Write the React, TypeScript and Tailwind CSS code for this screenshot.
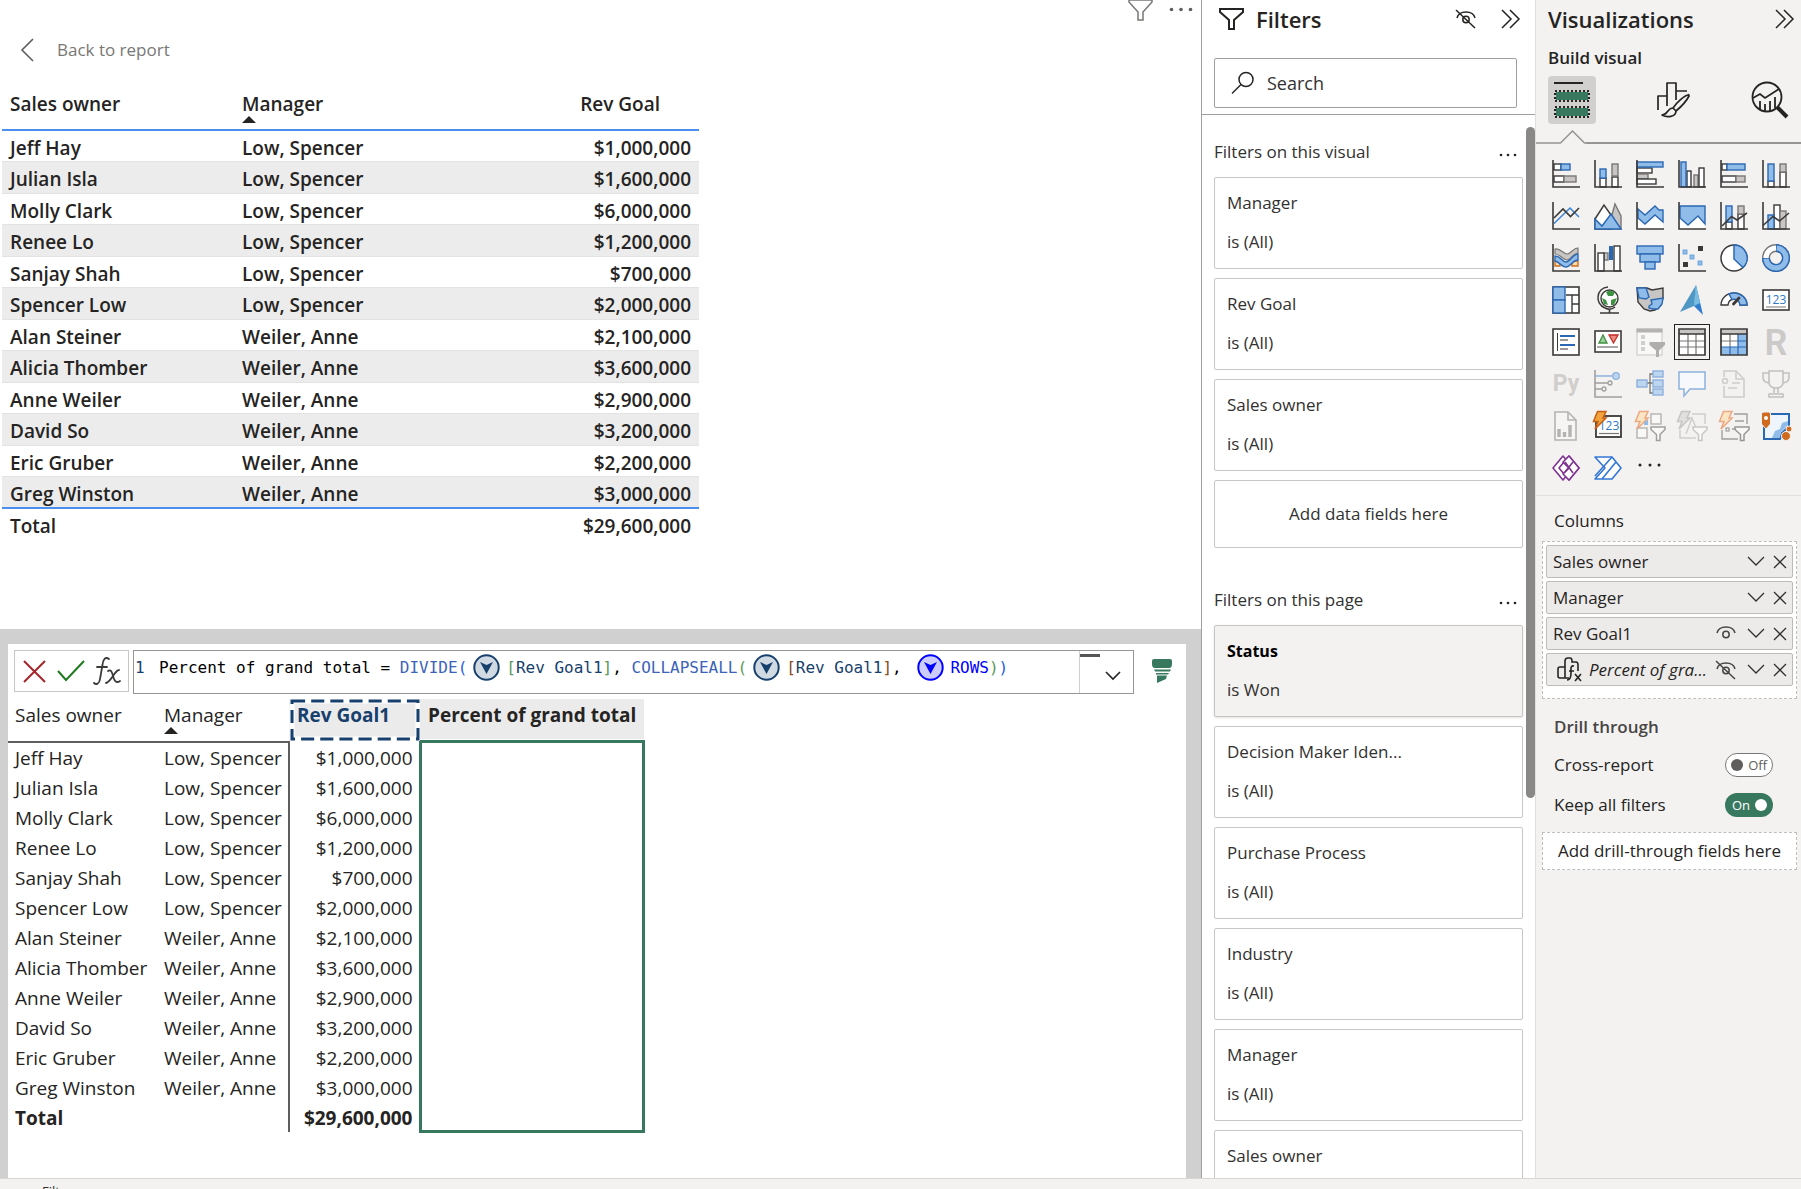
import React from "react";

const DARK = "#3b3a39";
const BLUE = "#2b68b3";
const SKY = "#8fbce8";
const MID = "#797775";
const LIGHT = "#c8c6c4";

type BoxProps = { x: number; y: number; X: number; Y: number; k?: "w" | "b" | "g" };

/** Bar given by its two opposite corners. */
function B({ x, y, X, Y, k = "w" }: BoxProps) {
  const fill = k === "w" ? "#fff" : k === "b" ? SKY : LIGHT;
  const stroke = k === "w" ? DARK : k === "b" ? BLUE : MID;
  return <rect x={x} y={y} width={X - x} height={Y - y} fill={fill} stroke={stroke} strokeWidth={1.4} />;
}

const Axis = ({ c = DARK }: { c?: string }) => <path d="M1 0V27H28" fill="none" stroke={c} strokeWidth={1.6} />;

const Bolt = ({ faded, gray }: { faded?: boolean; gray?: boolean }) => (
  <path
    d="M3.500 -.5H12L9 6H12L1 17L4 9.500H-.5Z"
    fill={gray ? "#e1dfdd" : faded ? "#fbe6c4" : "#f2a33c"}
    stroke={gray ? "#c8c6c4" : faded ? "#eaa982" : "#c55f16"}
    strokeWidth={1.5}
  />
);

const SmallFunnel = ({ c }: { c: string }) => (
  <path d="M15 15H29V17.500L24 22.500V28.500H20.500V22.500L15 17.500Z" fill="#f8f8f7" stroke={c} strokeWidth={1.5} />
);

const visuals: { name: string; art: React.ReactNode; selected?: boolean }[] = [
  { name: "Stacked bar chart", art: <><B x={2} y={4} X={9} Y={10} /><B x={9} y={4} X={18} Y={10} k="b" /><B x={2} y={16} X={12} Y={22} /><B x={12} y={16} X={24} Y={22} k="g" /><Axis /></> },
  { name: "Stacked column chart", art: <><B x={6} y={18} X={12} Y={27} /><B x={6} y={9} X={12} Y={18} k="b" /><B x={18} y={17} X={24} Y={27} /><B x={18} y={4} X={24} Y={16} k="g" /><Axis /></> },
  { name: "Clustered bar chart", art: <><B x={1} y={8} X={16} Y={13} /><B x={1} y={14} X={12} Y={19} k="g" /><B x={1} y={19} X={20} Y={24} /><B x={1} y={2} X={27} Y={7} k="b" /><Axis /></> },
  { name: "Clustered column chart", art: <><B x={9} y={11} X={13} Y={27} /><B x={3} y={2} X={8} Y={27} k="b" /><B x={16} y={15} X={20} Y={27} k="g" /><B x={21} y={8} X={26} Y={27} /><Axis /></> },
  { name: "100% stacked bar chart", art: <><B x={2} y={4} X={7} Y={10} /><B x={7} y={4} X={25} Y={10} k="b" /><B x={2} y={16} X={16} Y={22} /><B x={16} y={16} X={25} Y={22} k="g" /><Axis /></> },
  { name: "100% stacked column chart", art: <><B x={6} y={21} X={12} Y={27} /><B x={6} y={4} X={12} Y={21} k="b" /><B x={18} y={12} X={24} Y={27} /><B x={18} y={4} X={24} Y={12} k="g" /><Axis /></> },
  { name: "Line chart", art: <><path d="M2 21.500L18 6L27 15" fill="none" stroke="#3f86cf" strokeWidth={1.6} /><path d="M2 16L11 7L18.500 14.500L27 6" fill="none" stroke={DARK} strokeWidth={1.6} /><Axis /></> },
  { name: "Area chart", art: <><path d="M21 2L27 14V27H14Z" fill={LIGHT} stroke={MID} strokeWidth={1.4} /><path d="M1 17L10 3L17 13V27H1Z" fill="#fff" stroke={DARK} strokeWidth={1.5} /><path d="M1 17L8 24L17 12L27 27H1Z" fill={SKY} stroke={BLUE} strokeWidth={1.5} /></> },
  { name: "Stacked area chart", art: <><path d="M2 16L9 22L19 14L27 20V27H2Z" fill="#fff" /><path d="M2 7L9 13L19 4L23 8H27V20L19 13L9 22L2 16Z" fill={SKY} stroke={BLUE} strokeWidth={1.4} /><Axis /></> },
  { name: "100% stacked area chart", art: <><path d="M2 16L10 23L20 14L27 22V27H2Z" fill="#fff" /><path d="M2 4H27V22L20 14L10 23L2 16Z" fill={SKY} stroke={BLUE} strokeWidth={1.4} /><Axis /></> },
  { name: "Line and stacked column chart", art: <><B x={6} y={20} X={12} Y={27} /><B x={6} y={4} X={12} Y={20} k="b" /><B x={18} y={12} X={24} Y={27} /><B x={18} y={4} X={24} Y={12} k="g" /><path d="M2 24L11.500 14.500L17 18L27 11" fill="none" stroke={DARK} strokeWidth={1.6} /><Axis /></> },
  { name: "Line and clustered column chart", art: <><B x={12} y={3} X={18} Y={27} /><B x={18} y={9} X={24} Y={27} k="g" /><B x={6} y={13} X={12} Y={27} k="b" /><path d="M1 23.500L11 14.500L17.500 19L27 11" fill="none" stroke={DARK} strokeWidth={1.6} /><Axis /></> },
  { name: "Ribbon chart", art: <><path d="M3 17H8V22H3ZM20 17H26V22H20Z" fill="#fbd9a8" stroke="#d06f1e" strokeWidth={1.4} /><path d="M3 5C9 4 11 10 15 10S21 4 26 4V9C21 9 19 16 15 16S8 10 3 10Z" fill={LIGHT} stroke={MID} strokeWidth={1.2} /><path d="M3 12C9 12 10 18 14 18S21 10 26 10V16C20 16 19 23 14 23S8 18 3 17Z" fill={SKY} stroke={BLUE} strokeWidth={1.4} /><Axis /></> },
  { name: "Waterfall chart", art: <><B x={10} y={9} X={14} Y={16} k="g" /><B x={4} y={9} X={10} Y={27} /><rect x={15} y={2} width={4} height={14} fill={BLUE} /><B x={20} y={2} X={26} Y={27} /><Axis /></> },
  { name: "Funnel", art: <><B x={1} y={2} X={27} Y={10} k="b" /><B x={4} y={10} X={24} Y={18} k="b" /><B x={9} y={18} X={19} Y={25} k="b" /></> },
  { name: "Scatter chart", art: <><g fill={SKY} stroke="#5b9bd8" strokeWidth={0.8}><rect x={5} y={6} width={4} height={4} /><rect x={12} y={11} width={4} height={4} /><rect x={20} y={17} width={4} height={4} /></g><g fill={DARK}><rect x={20} y={2} width={5} height={5} /><rect x={5} y={18} width={5} height={5} /></g><Axis /></> },
  { name: "Pie chart", art: <><circle cx={14} cy={14} r={13} fill="#fff" stroke={DARK} strokeWidth={1.5} /><path d="M14 1A13 13 0 0 1 23 23.500L14 15Z" fill={SKY} stroke={BLUE} strokeWidth={1.5} /></> },
  { name: "Donut chart", art: <><circle cx={14} cy={14} r={10} fill="none" stroke={MID} strokeWidth={8} /><circle cx={14} cy={14} r={10} fill="none" stroke="#fff" strokeWidth={5.200} /><path d="M14 4A10 10 0 1 1 4 14" fill="none" stroke={BLUE} strokeWidth={8} /><path d="M14.700 4A10 10 0 1 1 4 14.700" fill="none" stroke={SKY} strokeWidth={5.200} /></> },
  { name: "Treemap", art: <><rect x={1} y={1} width={26} height={26} fill="#fff" stroke={DARK} strokeWidth={1.6} /><path d="M14 9H27M20 9V27M20 18H27" stroke={DARK} strokeWidth={1.4} /><B x={1} y={1} X={13} Y={14} k="b" /><B x={1} y={14} X={13} Y={27} k="b" /></> },
  { name: "Map", art: <><circle cx={15.500} cy={12.500} r={8.500} fill="#fff" stroke={DARK} strokeWidth={1.4} /><path d="M12 6L16 4.500L21 6L19 10L14 10ZM8 12L12 14L14 19L10 18ZM17 14L23 12L20 19L17 19Z" fill="#3f9142" /><path d="M14 1C2 2 .5 18 11 22C14 23.500 18 23.500 21 21" fill="none" stroke={DARK} strokeWidth={1.5} /><path d="M15.500 23V27M6 27H25" stroke={DARK} strokeWidth={1.6} /></> },
  { name: "Filled map", art: <><path d="M1 2H11L16 4L27 2V12L25 19L19 24L14 25L8 23L2 16Z" fill={LIGHT} stroke={DARK} strokeWidth={1.4} /><path d="M1 2H10L13 11L10 13L3 12Z" fill={SKY} stroke={BLUE} strokeWidth={1.4} /><path d="M15 14L27 12L26 18L22 23H17L13 22V20L16 18Z" fill={SKY} stroke={BLUE} strokeWidth={1.4} /></> },
  { name: "Azure map", art: <><path d="M18 -1L25 29L16 20Z" fill="#2f7bd0" /><path d="M18 -1L2 26L16 20Z" fill="#4f97c4" /><path d="M18 -1L16 20L22 17Z" fill="#79bde0" /></> },
  { name: "Gauge", art: <><path d="M1 19A13 12 0 0 1 27 19H20A6 6 0 0 0 8 19Z" fill="#fff" stroke={DARK} strokeWidth={1.4} /><path d="M9 8A13 12 0 0 1 27 19H20A6 6 0 0 0 12 13.500Z" fill={SKY} stroke={BLUE} strokeWidth={1.4} /><path d="M19 12L13.500 18" stroke={DARK} strokeWidth={2.800} strokeLinecap="round" /></> },
  { name: "Card", art: <><rect x={1} y={4} width={26} height={20} fill="#fff" stroke={DARK} strokeWidth={1.6} /><text x={14} y={18} textAnchor="middle" fontSize={12} fill="#2f78c4">123</text><path d="M4 21H24" stroke={MID} /></> },
  { name: "Multi-row card", art: <><rect x={1} y={1} width={26} height={26} fill="#fff" stroke={DARK} strokeWidth={1.6} /><path d="M5.500 5V23" stroke={DARK} /><path d="M8 8H23M8 17H23" stroke={BLUE} strokeWidth={2.200} /><path d="M8 12H16M8 21H16" stroke={MID} strokeWidth={1.500} /></> },
  { name: "KPI", art: <><rect x={1} y={3} width={26} height={21} fill="#fff" stroke={DARK} strokeWidth={1.6} /><path d="M5 15L9 7L13 15Z" fill="#9bd09d" stroke="#3f9142" strokeWidth={1.3} /><path d="M15 7H24L19.500 15Z" fill="#ef8a80" stroke="#bf2f25" strokeWidth={1.3} /><path d="M3 19H24" stroke={MID} strokeWidth={1.3} /></> },
  { name: "Slicer", art: <><rect x={1} y={1} width={25} height={26} fill="#f8f8f7" stroke="#c8c6c4" /><rect x={0.500} y={0.500} width={26} height={4} fill="#b5b3b1" /><g fill="#d2d0ce"><rect x={5} y={7} width={4} height={4} /><rect x={5} y={13} width={4} height={4} /><rect x={5} y={19} width={4} height={4} /></g><path d="M13.500 14H29V17L23 22.500V29H20V22.500L13.500 17Z" fill="#b0aeac" /></> },
  { name: "Table", selected: true, art: <><rect x={1} y={1} width={26} height={26} fill="#fff" /><rect x={1} y={1} width={26} height={5} fill={LIGHT} /><path d="M1 13H27M1 19H27M10 6V27M18 6V27" stroke={MID} strokeWidth={1.2} /><path d="M1 6H27M1 1H27V27H1Z" fill="none" stroke={DARK} strokeWidth={1.7} /></> },
  { name: "Matrix", art: <><rect x={1} y={1} width={26} height={26} fill="#fff" /><rect x={1} y={1} width={26} height={5} fill={LIGHT} /><path d="M18 6H27V27H1V19H18Z" fill={SKY} /><path d="M1 13H18M10 6V19" stroke={MID} strokeWidth={1.2} /><path d="M18 6V27M18 13H27M1 19H27M10 19V27" stroke={BLUE} strokeWidth={1.2} /><path d="M1 6H27M1 1H27V27H1Z" fill="none" stroke={DARK} strokeWidth={1.7} /></> },
  { name: "R script visual", art: <text x={14} y={27} textAnchor="middle" fontSize={36} fontWeight={600} fontFamily="Roboto, sans-serif" fill="#cccac8">R</text> },
  { name: "Python visual", art: <text x={14} y={21} textAnchor="middle" fontSize={23} fontWeight={700} fontFamily="Roboto, sans-serif" fill="#d0cecc">Py</text> },
  { name: "Key influencers", art: <><Axis c="#a19f9d" /><path d="M1 6H18" stroke="#8db0dc" strokeWidth={1.5} /><path d="M1 13H15M1 19H9" stroke="#a19f9d" strokeWidth={1.4} /><circle cx={22} cy={6} r={3.300} fill="#bcd6f0" stroke="#8db0dc" strokeWidth={1.3} /><circle cx={16} cy={13} r={2} fill="#f3f2f1" stroke="#a19f9d" strokeWidth={1.3} /><circle cx={10} cy={19} r={2} fill="#f3f2f1" stroke="#a19f9d" strokeWidth={1.3} /></> },
  { name: "Decomposition tree", art: <><path d="M10 13H17M17 4H14V23H17" fill="none" stroke={MID} strokeWidth={1.3} /><g fill="#bcd6f0" stroke="#8db0dc" strokeWidth={1.4}><rect x={1} y={10} width={10} height={7} /><rect x={17} y={1} width={10} height={6} /><rect x={17} y={10} width={10} height={7} /><rect x={17} y={19} width={10} height={6} /></g></> },
  { name: "Q&A", art: <path d="M1 2H27V19H12L6 26V19H1Z" fill="#f6f8fb" stroke="#8db0dc" strokeWidth={1.5} /> },
  { name: "Smart narrative", art: <><g fill="none" stroke="#cfcdcb" strokeWidth={1.6}><path d="M4 7V1H16L24 9V27H4V16M16 1V9H24M12 13H20M8 18H17" /><circle cx={5} cy={11} r={2.500} /></g></> },
  { name: "Metrics", art: <g fill="none" stroke="#c3c1bf" strokeWidth={1.6}><path d="M7 1H21V12C21 16 18 18 14 18S7 16 7 12ZM7 3H1V7C1 11 4 13 8 13M21 3H27V7C27 11 24 13 20 13M12 18V23M16 18V23M7 27V24H21V27Z" /></g> },
  { name: "Paginated report", art: <><path d="M3 0V28H24V8L16 0Z" fill="#f6f5f4" stroke="#b5b3b1" strokeWidth={1.600} /><path d="M16 0V8H24" fill="none" stroke="#b5b3b1" strokeWidth={1.600} /><path d="M7 17V25M12.500 20V25M18 13V25" stroke="#b5b3b1" strokeWidth={3.400} /></> },
  { name: "Card (new)", art: <><rect x={2} y={4} width={25} height={21} fill="#fff" stroke={DARK} strokeWidth={1.8} /><text x={15} y={18} textAnchor="middle" fontSize={12} fill="#2f78c4">123</text><path d="M5 21.500H25" stroke={MID} strokeWidth={1.2} /><Bolt /></> },
  { name: "Slicer (new)", art: <><g fill="#f8f8f7" stroke="#b5b3b1" strokeWidth={1.4}><rect x={1} y={16} width={10} height={10} /><rect x={15} y={2} width={10} height={10} /></g><rect x={8} y={8} width={4} height={5} fill={SKY} /><Bolt faded /><SmallFunnel c="#a19f9d" /></> },
  { name: "Text slicer", art: <><path d="M14 2H27V12M2 18V26H18M8 22L14 6L18 16" fill="none" stroke="#d0cecc" strokeWidth={1.5} /><Bolt gray /><SmallFunnel c="#c8c6c4" /></> },
  { name: "List slicer", art: <><path d="M14 2H27V12M2 18V27H18M15 9H24M12 17H15" fill="none" stroke="#a19f9d" strokeWidth={1.4} /><rect x={6} y={16} width={3} height={3} fill="none" stroke="#a19f9d" strokeWidth={1.2} /><Bolt faded /><SmallFunnel c="#979593" /></> },
  { name: "ArcGIS Maps", art: <><path d="M7 2H27V14L20 21L18 27H2V13Z" fill="#eef5fc" stroke={BLUE} strokeWidth={2} /><path d="M26 3V9L20 11L18 17L13 19L10 26H17L19 20L26 13Z" fill={SKY} /><path d="M-.5 2Q-.5 0 2 0H6.500Q8.500 0 8.500 2V12L4 17L-.5 12Z" fill="#d06a1e" stroke="#f3f2f1" /><circle cx={4} cy={6} r={2} fill="#fff" /><circle cx={24} cy={24} r={4.500} fill="#d06a1e" stroke="#f3f2f1" /><circle cx={27} cy={17} r={3} fill="#d06a1e" stroke="#f3f2f1" /></> },
  { name: "Power Apps", art: <g fill="#fff" stroke="#7f3390" strokeWidth={1.6} strokeLinejoin="round"><path d="M11 2L1 14L11 26L21 14Z" /><path d="M17 2L27 14L17 26L7 14Z" fill="none" stroke="#7f3390" /><path d="M17 2L11 8L17 14L11 20L17 26L27 14Z" /><path d="M21 8L13 18M13 8L21 19" /></g> },
  { name: "Power Automate", art: <g fill="#fff" stroke="#3277d5" strokeWidth={1.600} strokeLinejoin="round"><path d="M1 3H18L27 14L18 25H1L11 14Z" /><path d="M18 3L1 22M22 8L8 25" /></g> },
];

const people: [string, string, string][] = [
  ["Jeff Hay", "Low, Spencer", "$1,000,000"],
  ["Julian Isla", "Low, Spencer", "$1,600,000"],
  ["Molly Clark", "Low, Spencer", "$6,000,000"],
  ["Renee Lo", "Low, Spencer", "$1,200,000"],
  ["Sanjay Shah", "Low, Spencer", "$700,000"],
  ["Spencer Low", "Low, Spencer", "$2,000,000"],
  ["Alan Steiner", "Weiler, Anne", "$2,100,000"],
  ["Alicia Thomber", "Weiler, Anne", "$3,600,000"],
  ["Anne Weiler", "Weiler, Anne", "$2,900,000"],
  ["David So", "Weiler, Anne", "$3,200,000"],
  ["Eric Gruber", "Weiler, Anne", "$2,200,000"],
  ["Greg Winston", "Weiler, Anne", "$3,000,000"],
];

const SortMark = () => (
  <svg className="absolute top-full left-0" width="14" height="7" viewBox="0 0 14 7" aria-hidden="true">
    <path d="M0 7L7 0L14 7Z" fill="#252423" />
  </svg>
);

const DoubleChevron = () => (
  <svg width="20" height="20" viewBox="0 0 20 20" fill="none" stroke="#252423" strokeWidth="1.5" aria-hidden="true">
    <path d="M1 1L10 10L1 19M9 1L18 10L9 19" />
  </svg>
);

const EyeIcon = ({ off, className }: { off?: boolean; className?: string }) => (
  <svg className={className} width="22" height="20" viewBox="0 0 22 20" fill="none" stroke="currentColor" strokeWidth="1.5" aria-hidden="true">
    <path d="M2 9C4 1 18 1 20 9" />
    <circle cx="11" cy="10.500" r="3.2" />
    {off && <path d="M1 1L20 19" />}
  </svg>
);

function TopTable() {
  return (
    <table className="w-[697px] table-fixed border-collapse text-[19px] leading-6 font-semibold text-[#252423]">
      <colgroup>
        <col className="w-[232px]" />
        <col className="w-[232px]" />
        <col />
      </colgroup>
      <thead>
        <tr className="h-12 border-b-2 border-[#4a8fee] text-left align-top">
          <th className="px-2 pt-2.5 font-semibold">Sales owner</th>
          <th className="px-2 pt-2.5 font-semibold">
            <span className="relative inline-block">Manager<SortMark /></span>
          </th>
          <th className="pt-2.5 pr-[39px] text-right font-semibold">Rev Goal</th>
        </tr>
      </thead>
      <tbody>
        {people.map(([owner, manager, goal]) => (
          <tr key={owner} className="h-[31px] even:h-[32px] even:border-y even:border-[#e3e3e3] even:bg-[#ececec]">
            <td className="px-2 pt-1">{owner}</td>
            <td className="px-2 pt-1">{manager}</td>
            <td className="px-2 pt-1 text-right">{goal}</td>
          </tr>
        ))}
      </tbody>
      <tfoot>
        <tr className="h-[34px] border-t-2 border-[#4a8fee]">
          <td className="px-2">Total</td>
          <td />
          <td className="px-2 text-right">$29,600,000</td>
        </tr>
      </tfoot>
    </table>
  );
}

function CalcTable() {
  return (
    <table className="mt-[5px] w-[637px] table-fixed border-collapse text-[19px] leading-6 text-[#252423]">
      <colgroup>
        <col className="w-[149px]" />
        <col className="w-[132px]" />
        <col className="w-[131px]" />
        <col />
      </colgroup>
      <thead>
        <tr className="h-[43px] text-left align-top">
          <th className="border-b-2 border-[#605e5c] pt-1 pl-[7px] font-normal">Sales owner</th>
          <th className="border-b-2 border-[#605e5c] pt-1 pl-[7px] font-normal">
            <span className="relative inline-block">Manager<SortMark /></span>
          </th>
          <th className="p-0">
            <div className="relative h-[42px] bg-[#ebebeb] pt-1 pl-2 font-bold text-[#17406d]">
              Rev Goal1
              <svg className="absolute inset-0 h-full w-full" viewBox="0 0 130 42" preserveAspectRatio="none" fill="none" strokeWidth="3" aria-hidden="true">
                <rect x="3" y="2" width="125" height="38" stroke="#fff" strokeWidth="5" />
                <rect x="3" y="2" width="125" height="38" stroke="#17406d" strokeDasharray="13 6" />
              </svg>
            </div>
          </th>
          <th className="p-0">
            <div className="h-10 bg-[#ebebeb] pt-1 pl-2 font-bold whitespace-nowrap">Percent of grand total</div>
          </th>
        </tr>
      </thead>
      <tbody>
        {people.map(([owner, manager, goal], i) => (
          <tr key={owner} className="h-[30px]">
            <td className="pt-0.5 pl-[7px]">{owner}</td>
            <td className="border-r-2 border-[#605e5c] pt-0.5 pl-[7px] whitespace-nowrap">{manager}</td>
            <td className="pt-0.5 pr-1.5 text-right">{goal}</td>
            {i === 0 && <td rowSpan={13} className="border-3 border-[#38785f]" />}
          </tr>
        ))}
        <tr className="h-[30px] font-bold">
          <td className="pt-0.5 pl-[7px]">Total</td>
          <td className="border-r-2 border-[#605e5c]" />
          <td className="pt-0.5 pr-1.5 text-right">$29,600,000</td>
        </tr>
      </tbody>
    </table>
  );
}

const FieldBadge = ({ bright }: { bright?: boolean }) => (
  <svg className="mx-1.5 shrink-0" width="27" height="27" viewBox="0 0 27 27" aria-hidden="true">
    <circle cx="13.5" cy="13.5" r="12.2" fill={bright ? "#ccccff" : "#d1d9e2"} stroke={bright ? "#0000ff" : "#17406d"} strokeWidth="2" />
    <path d="M7 8L13.500 11L20 8L13.500 20Z" fill={bright ? "#0000ff" : "#17406d"} />
  </svg>
);

function FormulaBar() {
  return (
    <div className="flex items-start pr-3 pl-1.5">
      <div className="flex h-[42px] w-[115px] shrink-0 items-center justify-between border border-[#c8c6c4] px-1.5">
        <button aria-label="Cancel">
          <svg width="28" height="26" viewBox="0 0 28 26" fill="none" stroke="#a4262c" strokeWidth="2" aria-hidden="true"><path d="M3 3L24 24M24 3L3 24" /></svg>
        </button>
        <button aria-label="Commit">
          <svg width="30" height="26" viewBox="0 0 30 26" fill="none" stroke="#1f7a1f" strokeWidth="2" aria-hidden="true"><path d="M2 13L10 22L28 3" /></svg>
        </button>
        <button aria-label="Functions">
          <svg width="29" height="30" viewBox="0 0 29 30" fill="none" stroke="#3b3a39" strokeWidth="1.8" strokeLinecap="round" aria-hidden="true">
            <path d="M16 3C12 0 10 4 9.500 9L7 23C6.500 28 3 29 1 27M4 11H14" />
            <path d="M15 15C18 13 19 16 20 20S23 28 27 25M26 14C22 14 18 26 13 27" />
          </svg>
        </button>
      </div>
      <div className="ml-1 flex h-11 min-w-0 flex-1 border border-[#979593]">
        <div className="flex h-[34px] min-w-0 flex-1 items-center pl-px font-['DejaVu_Sans_Mono',monospace] text-[16px] whitespace-pre text-black">
          <span className="w-6 shrink-0 text-[#17406d]">1</span>
          <span>Percent of grand total = <span className="text-[#3b63b8]">DIVIDE</span><span className="text-[#2a5fd8]">(</span></span>
          <FieldBadge />
          <span><span className="text-[#5a9a5a]">[</span><span className="text-[#17406d]">Rev Goal1</span><span className="text-[#5a9a5a]">]</span>, <span className="text-[#3b63b8]">COLLAPSEALL</span><span className="text-[#5a9a5a]">(</span></span>
          <FieldBadge />
          <span><span className="text-[#8a4b1f]">[</span><span className="text-[#17406d]">Rev Goal1</span><span className="text-[#8a4b1f]">]</span>, </span>
          <FieldBadge bright />
          <span><span className="text-[#0000ff]">ROWS</span><span className="text-[#5a9a5a]">)</span><span className="text-[#2a5fd8]">)</span></span>
        </div>
        <div className="relative w-[54px] shrink-0 border-l border-[#d2d0ce]">
          <div className="mt-[3px] h-[3px] w-5 bg-[#555]" />
          <button aria-label="Expand formula" className="absolute right-3 bottom-3">
            <svg width="16" height="10" viewBox="0 0 16 10" fill="none" stroke="#252423" strokeWidth="1.6" aria-hidden="true"><path d="M1 1L8 8L15 1" /></svg>
          </button>
        </div>
      </div>
      <button aria-label="Performance flow" className="mt-2 ml-4">
        <svg width="24" height="26" viewBox="0 0 24 26" fill="#38785f" aria-hidden="true">
          <path d="M4 1H20Q22 1 22 3V6Q22 10 19 10H5Q2 10 2 6V3Q2 1 4 1ZM4 11.500H21L20 13.500H5ZM6 15H19L18 16.500H6ZM7 17.500H17L16 21L7 25Z" />
        </svg>
      </button>
    </div>
  );
}

function FilterCard({ title, value = "is (All)", active }: { title: string; value?: string; active?: boolean }) {
  return (
    <div className={active ? "h-[92px] shrink-0 rounded-xs border border-[#c8c6c4] bg-[#f3f2f1] px-3 pt-[13px] shadow-sm" : "h-[92px] shrink-0 rounded-xs border border-[#c8c6c4] px-3 pt-[13px]"}>
      <div className={active ? "text-[16px] font-bold text-black" : ""}>{title}</div>
      <div className="mt-[15px]">{value}</div>
    </div>
  );
}

const SectionHead = ({ children }: { children: React.ReactNode }) => (
  <div className="flex items-center justify-between pr-1.5">
    <h3>{children}</h3>
    <button aria-label="More options" className="pt-1.5">
      <svg width="18" height="4" viewBox="0 0 18 4" fill="#252423" aria-hidden="true"><circle cx="2" cy="2" r="1.3" /><circle cx="9" cy="2" r="1.3" /><circle cx="16" cy="2" r="1.3" /></svg>
    </button>
  </div>
);

function FiltersPane() {
  return (
    <aside className="flex w-[334px] shrink-0 flex-col border-l border-[#a19f9d] bg-white text-[17px] leading-6 text-[#323130]">
      <header className="flex h-[38px] items-center pr-3.5 pl-4 text-[#252423]">
        <svg width="26" height="24" viewBox="0 0 26 24" fill="none" stroke="#252423" strokeWidth="2" aria-hidden="true"><path d="M2 2H25V5L16 13V22H11V13L2 5Z" /></svg>
        <h2 className="ml-3 flex-1 text-[22px] font-semibold">Filters</h2>
        <button aria-label="Hide filters" className="mr-6"><EyeIcon off /></button>
        <button aria-label="Collapse filters"><DoubleChevron /></button>
      </header>
      <div className="border-b border-[#a19f9d] pt-5 pr-[18px] pb-1.5 pl-3">
        <label className="flex h-[50px] items-center rounded-xs border border-[#a19f9d] pl-4">
          <svg width="24" height="24" viewBox="0 0 24 24" fill="none" stroke="#252423" strokeWidth="1.5" aria-hidden="true"><circle cx="15" cy="8.500" r="7" /><path d="M10 13.500L1 22.500" /></svg>
          <input aria-label="Search" placeholder="Search" className="ml-3 min-w-0 flex-1 text-[18px] outline-none placeholder:text-[#323130]" />
        </label>
      </div>
      <div className="flex min-h-0 flex-1">
        <div className="flex min-w-0 flex-1 flex-col gap-[9px] overflow-hidden pt-[25px] pr-[3px] pl-3">
          <div className="pb-1"><SectionHead>Filters on this visual</SectionHead></div>
          <FilterCard title="Manager" />
          <FilterCard title="Rev Goal" />
          <FilterCard title="Sales owner" />
          <button className="h-[68px] shrink-0 rounded-xs border border-[#c8c6c4]">Add data fields here</button>
          <div className="pt-[31px] pb-1"><SectionHead>Filters on this page</SectionHead></div>
          <FilterCard title="Status" value="is Won" active />
          <FilterCard title="Decision Maker Iden..." />
          <FilterCard title="Purchase Process" />
          <FilterCard title="Industry" />
          <FilterCard title="Manager" />
          <FilterCard title="Sales owner" />
        </div>
        <div className="mt-3 h-[671px] w-[9px] rounded-full bg-[#8a8886]" />
      </div>
    </aside>
  );
}

function FieldPill({ name, icon }: { name: string; icon?: "eye" | "calc" }) {
  return (
    <div className="flex h-[33px] items-center rounded-xs border border-[#bebbb8] bg-[#edebe9] pr-[5px] pl-1.5">
      {icon === "calc" && (
        <svg className="mr-1.5 ml-1 shrink-0" width="26" height="26" viewBox="0 0 26 26" fill="none" stroke="#252423" strokeWidth="1.6" aria-hidden="true">
          <path d="M12 21H3Q1 21 1 19V12Q1 10 3 10H8V4Q8 1 11 1H13Q15 1 15 4V5H19Q21 5 21 8V14M8 10V21" />
          <path d="M17 9C13 8 14 13 14 16S14 23 10 23M12 14H17M18 17L24 24M24 17L18 24" />
        </svg>
      )}
      <span className={icon === "calc" ? "min-w-0 flex-1 whitespace-nowrap italic" : "min-w-0 flex-1 truncate"}>{name}</span>
      {icon && <button aria-label="Visibility" className="mr-2.5 shrink-0 text-[#484644]"><EyeIcon off={icon === "calc"} /></button>}
      <button aria-label={`${name} menu`} className="mr-2 shrink-0">
        <svg width="18" height="11" viewBox="0 0 18 11" fill="none" stroke="#323130" strokeWidth="1.3" aria-hidden="true"><path d="M1 1L9 9L17 1" /></svg>
      </button>
      <button aria-label={`Remove ${name}`} className="shrink-0">
        <svg width="14" height="14" viewBox="0 0 14 14" fill="none" stroke="#323130" strokeWidth="1.3" aria-hidden="true"><path d="M1 1L13 13M13 1L1 13" /></svg>
      </button>
    </div>
  );
}

function Toggle({ label, on }: { label: string; on?: boolean }) {
  return (
    <div className="flex h-10 items-center justify-between pr-7 pl-[18px]">
      <span>{label}</span>
      <button
        role="switch"
        aria-checked={!!on}
        aria-label={label}
        className={on ? "flex h-6 w-12 items-center justify-between rounded-full bg-[#38785f] pr-1.5 pl-[7px] text-[13px] text-white" : "flex h-6 w-12 flex-row-reverse items-center justify-between rounded-full border border-[#797775] bg-white px-[5px] text-[13px] text-[#605e5c]"}
      >
        {on ? "On" : "Off"}
        <span className={on ? "size-3 rounded-full bg-white" : "size-3 rounded-full bg-[#605e5c]"} />
      </button>
    </div>
  );
}

function VisualizationsPane() {
  return (
    <aside className="flex w-[266px] shrink-0 flex-col overflow-hidden border-l border-[#e1dfdd] bg-[#f3f2f1] text-[17px] leading-6 text-[#252423]">
      <header className="flex h-[38px] items-center justify-between pr-1.5 pl-3">
        <h2 className="text-[22px] font-semibold">Visualizations</h2>
        <button aria-label="Collapse visualizations"><DoubleChevron /></button>
      </header>
      <h3 className="mt-2 pl-3 font-semibold">Build visual</h3>
      <div className="mt-1.5 flex items-center justify-between pr-3 pl-3">
        <button aria-label="Build visual" className="flex size-12 items-center justify-center rounded-sm bg-[#d2d0ce]">
          <svg width="36" height="38" viewBox="0 0 36 38" aria-hidden="true">
            <path d="M0 2H29" stroke="#252423" strokeWidth="2" />
            <g fill="#38785f" stroke="#d2d0ce" strokeWidth="2"><rect x="1" y="10" width="34" height="10" /><rect x="1" y="26" width="34" height="10" /></g>
            <g fill="none" stroke="#252423" strokeWidth="2" strokeDasharray="2 2"><rect x="1" y="10" width="34" height="10" /><rect x="1" y="26" width="34" height="10" /></g>
          </svg>
        </button>
        <button aria-label="Format visual">
          <svg width="36" height="36" viewBox="0 0 36 36" fill="none" stroke="#252423" strokeWidth="1.700" strokeLinejoin="round" aria-hidden="true">
            <path d="M2 28V14H11M11 24V1H20V18M20 9H31M32 13C28 14 21 20 17 26L20 29C26 24 31 18 33 14Q33 12 32 13ZM17 26C11 26 12 33 6 33C11 36 20 35 20 29" />
          </svg>
        </button>
        <button aria-label="Analytics">
          <svg width="38" height="38" viewBox="0 0 38 38" fill="none" stroke="#252423" strokeWidth="1.800" aria-hidden="true">
            <circle cx="16" cy="16" r="14.500" />
            <path d="M2 17L9 13L14 17L28 8M9 28V20M14 30V23M19 30V20M24 27V16" />
            <path d="M26 26L36 36" strokeWidth="4" />
          </svg>
        </button>
      </div>
      <div className="mt-1.5 flex">
        <svg className="shrink-0" width="50" height="14" viewBox="0 0 50 14" fill="none" stroke="#979593" strokeWidth="1.500" aria-hidden="true"><path d="M0 13H24.500L36.500 1L48.500 13H50" /></svg>
        <div className="flex-1 border-b-2 border-[#979593]" />
      </div>
      <div className="mt-[9px] grid grid-cols-[repeat(6,42px)] pl-[9px]">
        {visuals.map((v) => (
          <button key={v.name} aria-label={v.name} className="flex size-[42px] items-center justify-center">
            <span className={v.selected ? "flex size-9 items-center justify-center border border-[#252423]" : "flex size-9 items-center justify-center"}>
              <svg width="28" height="28" viewBox="0 0 28 28" className="overflow-visible" aria-hidden="true">{v.art}</svg>
            </span>
          </button>
        ))}
        <button aria-label="Get more visuals" className="flex size-[42px] items-center justify-center pb-1.5">
          <svg width="24" height="4" viewBox="0 0 24 4" fill="#252423" aria-hidden="true"><circle cx="2" cy="2" r="1.500" /><circle cx="12" cy="2" r="1.500" /><circle cx="21" cy="2" r="1.500" /></svg>
        </button>
      </div>
      <div className="mt-1.5 border-t border-[#e1dfdd] pt-[13px] pr-1 pl-1.5">
        <h3 className="pl-3">Columns</h3>
        <div className="mt-2 flex flex-col gap-[3px] border border-dashed border-[#c0bebc] bg-white px-[3px] pt-[3px] pb-3">
          <FieldPill name="Sales owner" />
          <FieldPill name="Manager" />
          <FieldPill name="Rev Goal1" icon="eye" />
          <FieldPill name="Percent of gra..." icon="calc" />
        </div>
      </div>
      <div className="pt-4">
        <h3 className="mb-1.5 pl-[18px] font-semibold text-[#484644]">Drill through</h3>
        <Toggle label="Cross-report" />
        <Toggle label="Keep all filters" on />
        <div className="mt-[7px] mr-1 ml-1.5 flex h-[38px] items-center justify-center border border-dashed border-[#c0bebc] bg-white whitespace-nowrap">Add drill-through fields here</div>
      </div>
    </aside>
  );
}

export default function App() {
  return (
    <div className="flex h-screen flex-col overflow-hidden bg-white font-['Open_Sans','Noto_Sans',sans-serif]">
      <div className="flex min-h-0 flex-1">
        <main className="flex min-w-0 flex-1 flex-col">
          <section className="min-h-0 flex-1 overflow-hidden">
            <div className="flex h-[22px] justify-end gap-4 pr-2">
              <button aria-label="Filters">
                <svg width="26" height="22" viewBox="0 0 26 22" fill="none" stroke="#797775" strokeWidth="1.500" aria-hidden="true"><path d="M2 0V2L11 12V20H16V12L25 2V0Z" /></svg>
              </button>
              <button aria-label="More options" className="pb-1">
                <svg width="24" height="5" viewBox="0 0 24 5" fill="#605e5c" aria-hidden="true"><circle cx="2.500" cy="2.500" r="1.800" /><circle cx="12" cy="2.500" r="1.800" /><circle cx="21.500" cy="2.500" r="1.800" /></svg>
              </button>
            </div>
            <a href="#report" className="mt-4 flex h-6 w-max items-center pl-5 text-[17px] text-[#797775]">
              <svg width="14" height="24" viewBox="0 0 14 24" fill="none" stroke="#605e5c" strokeWidth="1.600" aria-hidden="true"><path d="M13 1L2 12L13 23" /></svg>
              <span className="ml-[23px]">Back to report</span>
            </a>
            <div className="mt-5 pl-0.5"><TopTable /></div>
          </section>
          <section className="shrink-0 bg-[#d0d0d0] pt-[15px] pr-[15px] pl-2">
            <div className="bg-white pt-1.5 pb-[45px]">
              <FormulaBar />
              <CalcTable />
            </div>
          </section>
        </main>
        <FiltersPane />
        <VisualizationsPane />
      </div>
      <footer className="h-[11px] shrink-0 overflow-hidden border-t border-[#d8d6d4] bg-[#f3f2f1] pl-[42px] text-[13px] leading-6 text-[#323130]">
        <div>Filters</div>
      </footer>
    </div>
  );
}
